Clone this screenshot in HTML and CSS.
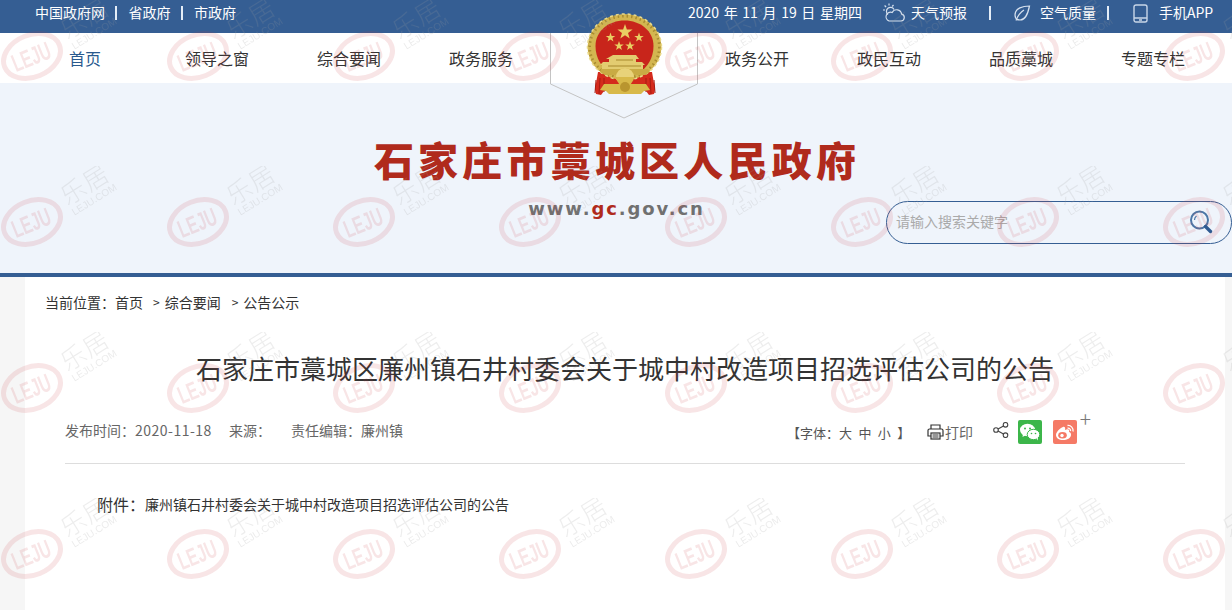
FILE: index.html
```html
<!DOCTYPE html>
<html lang="zh-CN">
  <head>
    <meta charset="UTF-8" />
    <meta name="viewport" content="width=device-width, initial-scale=1.0" />
    <title>石家庄市藁城区人民政府</title>
    <link rel="stylesheet" href="styles.css">
  </head>
  <body>
    <div class="topbar">
      <div class="top-left">
        <a>中国政府网</a><i class="sep"></i><a>省政府</a><i class="sep"></i><a>市政府</a>
      </div>
      <div class="top-right">
        <span class="date">2020 年 11 月 19 日 星期四</span>
        <svg class="ic-weather" width="24" height="22" viewBox="0 0 24 22" fill="none" stroke="#d5e0ee" stroke-width="1.2">
          <path d="M7 19h12a3.5 3.5 0 0 0 .6-6.9 5 5 0 0 0-9.4-1.6A4.4 4.4 0 0 0 7 19z" />
          <path d="M6 12.5a4 4 0 1 1 6-5" />
          <path d="M7 1.5v2M1 8h2M2.600 3.500l1.500 1.500M11.500 3l-1.300 1.500" />
        </svg>
        <a class="weather">天气预报</a>
        <i class="sep sep-a"></i>
        <svg class="ic-leaf" width="18" height="18" viewBox="0 0 18 18" fill="none" stroke="#d5e0ee" stroke-width="1.2">
          <path d="M16.500 2C10 2 2 4 2 11c0 3 2 5 5 5 6 0 8-7 9.500-14z" />
          <path d="M3 16.500C5 11 8 8 11 6" />
        </svg>
        <a class="air">空气质量</a>
        <i class="sep sep-b"></i>
        <svg class="ic-phone" width="15" height="19" viewBox="0 0 15 19" fill="none" stroke="#c8d6e8" stroke-width="1.4">
          <rect x="1" y="1" width="13" height="17" rx="2" />
          <path d="M1 14h13M6 16h3" />
        </svg>
        <a class="app">手机APP</a>
      </div>
    </div>

    <div class="nav">
      <div class="nav-group">
        <a class="cur">首页</a>
        <a>领导之窗</a>
        <a>综合要闻</a>
        <a>政务服务</a>
      </div>
      <div class="nav-group">
        <a>政务公开</a>
        <a>政民互动</a>
        <a>品质藁城</a>
        <a>专题专栏</a>
      </div>
    </div>

    <div class="banner">
      <h1 class="site-name">石家庄市藁城区人民政府</h1>
      <p class="site-url">www.<b>gc</b>.gov.cn</p>
      <div class="search">
        <input type="text" placeholder="请输入搜索关键字" />
        <svg width="24" height="26" viewBox="0 0 24 26" fill="none">
          <circle cx="10.500" cy="11" r="8.500" stroke="#4d76a6" stroke-width="2" />
          <path d="M5.500 11a5 5 0 0 1 2-4" stroke="#4d76a6" stroke-width="1.200" />
          <path d="M16.500 17.500l5 5" stroke="#2f5a92" stroke-width="3.400" stroke-linecap="round" />
        </svg>
      </div>
    </div>

    <svg class="emblem" width="160" height="112" viewBox="545 10 160 112">
      <defs>
        <polygon id="star" fill="#e9cf63" points="0,-10 2.350,-3.240 9.510,-3.090 3.800,1.240 5.880,8.090 0,4 -5.880,8.090 -3.800,1.240 -9.510,-3.090 -2.350,-3.240" />
      </defs>
      <polyline points="550.500,33 550.500,84 624,118 697.500,84 697.500,33" fill="none" stroke="#c4c4c4" />
      <!-- ribbon -->
      <path d="M598 72h54l3 17-1 5-5 1-3-4h-42l-3 4-5-1-1-5z" fill="#d42a1c" />
      <path d="M596 80l-1 13M600 78l-1 16M604 78v14M646 78v14M650 78l1 16M654 80l1 13" stroke="#a81b10" />
      <!-- wheat ring -->
      <ellipse cx="624.500" cy="47" rx="37" ry="33" fill="#d3b650" />
      <ellipse cx="624.500" cy="47" rx="35" ry="31" fill="none" stroke="#a98c30" stroke-width="3" stroke-dasharray="1.500 3" />
      <ellipse cx="624.500" cy="47" rx="37" ry="33" fill="none" stroke="#e9d98a" stroke-width="1.500" stroke-dasharray="3 3" />
      <path d="M595.500 46c0-15 13-25.500 29-25.500s29 10.500 29 25.500c0 13-7 21-11 24h-36c-4-3-11-11-11-24z" fill="#c8251b" />
      <use href="#star" transform="translate(625 32) scale(.8)" />
      <use href="#star" transform="translate(610.500 37.500) scale(.5)" />
      <use href="#star" transform="translate(639 37.500) scale(.5)" />
      <use href="#star" transform="translate(619 46) scale(.5)" />
      <use href="#star" transform="translate(630 46) scale(.5)" />
      <!-- gate building -->
      <path d="M613 55h23l3 4h-3v3h6l3 3h-2v4h-41v-4h-2l3-3h6v-3h-3z" fill="#e3cc70" />
      <path d="M601 69h47l2 3-5 3h-40l-5-3z" fill="#c9ab44" />
      <path d="M616 60h17M608 66h33" stroke="#a8892c" />
      <!-- gear and banner -->
      <circle cx="625" cy="77" r="9" fill="#d8b94a" />
      <path d="M616 77a9 9 0 0 1 18 0z" fill="#e8d27a" />
      <path d="M604 84h42l4 6-6 1-3 3h-32l-3-3-6-1z" fill="#d8b94a" />
      <circle cx="625" cy="87" r="5" fill="#b9952f" />
    </svg>

    <div class="page">
      <div class="crumb">
        <span>当前位置：</span><a>首页</a><em>&gt;</em><a>综合要闻</a><em class="last">&gt;</em><a>公告公示</a>
      </div>
      <h2 class="title">石家庄市藁城区廉州镇石井村委会关于城中村改造项目招选评估公司的公告</h2>
      <div class="meta">
        <div class="meta-left">
          <span>发布时间：<span class="num">2020-11-18</span></span>
          <span class="src">来源：</span>
          <span class="editor">责任编辑：廉州镇</span>
        </div>
        <div class="meta-right">
          <span class="fontsize">【字体：大 中 小 】</span>
          <svg class="ic-print" width="17" height="16" viewBox="0 0 17 16" fill="none" stroke="#333" stroke-width="1.200">
            <path d="M4 5V1h9v4M4 12H1V6.500A1.500 1.500 0 0 1 2.500 5h12A1.500 1.500 0 0 1 16 6.500V12h-3" />
            <rect x="4" y="9" width="9" height="6" />
            <path d="M5.500 11h6M5.500 13h6" />
          </svg>
          <span class="print">打印</span>
          <svg class="ic-share" width="16" height="16" viewBox="0 0 16 16" fill="none" stroke="#444" stroke-width="1.100">
            <circle cx="3" cy="8" r="2.300" />
            <circle cx="12.500" cy="2.800" r="2.300" />
            <circle cx="12.500" cy="13.200" r="2.300" />
            <path d="M5 7l5.500-3M5 9l5.500 3" />
          </svg>
          <span class="btn-wx">
            <svg width="20" height="18" viewBox="0 0 20 18" fill="#fff">
              <ellipse cx="7.500" cy="7" rx="7.500" ry="6.200" />
              <path d="M3 11l-.5 3 3.500-2z" />
              <ellipse cx="13.500" cy="11.500" rx="6.300" ry="5.200" stroke="#3cb64a" />
              <path d="M16.500 15.500l1.500 2-.2-3z" />
              <circle cx="5" cy="5.500" r="1" fill="#3cb64a" />
              <circle cx="10" cy="5.500" r="1" fill="#3cb64a" />
              <circle cx="11.500" cy="10.500" r=".8" fill="#3cb64a" />
              <circle cx="15.500" cy="10.500" r=".8" fill="#3cb64a" />
            </svg>
          </span>
          <span class="btn-wb">
            <svg width="20" height="18" viewBox="0 0 20 18" fill="none">
              <path d="M8 17C4 17 1 15 1 12c0-3 4-7 7-8 2-.6 2.500 1 2 3 3-1.500 5-.5 4 2 2 .5 2 2 2 3 0 3-4 5-8 5z" fill="#fff" />
              <ellipse cx="7.500" cy="12.300" rx="4.300" ry="3.300" fill="#f57a66" />
              <circle cx="7" cy="12.500" r="1.700" fill="#fff" />
              <path d="M12.500 2.500a5 5 0 0 1 5.500 6M12.500 5.200a2.500 2.500 0 0 1 3 3" stroke="#fff" stroke-width="1.300" />
            </svg>
          </span>
          <span class="more">+</span>
        </div>
      </div>
      <div class="attach">
        <span class="attach-label">附件：</span><a>廉州镇石井村委会关于城中村改造项目招选评估公司的公告</a>
      </div>
    </div>

    <!-- repeated watermark over the whole picture -->
    <svg class="watermark" width="1232" height="610">
      <defs>
        <pattern id="wm" width="166" height="166" patternUnits="userSpaceOnUse">
          <g transform="translate(32 56) rotate(-22)">
            <ellipse rx="29.500" ry="21" fill="none" class="wm-ring" />
            <text x="-1" y="9" text-anchor="middle" class="wm-logo" textLength="40" lengthAdjust="spacingAndGlyphs">LEJU</text>
          </g>
          <g transform="translate(87 22) rotate(-32)">
            <text x="0" y="5" text-anchor="middle" class="wm-cn">乐居</text>
            <text x="0" y="17" text-anchor="middle" class="wm-en">LEJU.COM</text>
          </g>
        </pattern>
      </defs>
      <rect width="1232" height="610" fill="url(#wm)" />
    </svg>
  </body>
</html>
```

FILE: styles.css
```css
* {
  margin: 0;
  padding: 0;
  box-sizing: border-box;
}
html,
body {
  height: 610px;
  overflow: hidden;
}
body {
  position: relative;
  font-family: "Noto Sans CJK SC", "Liberation Sans", sans-serif;
  background-color: #f6f6f6;
  color: #333;
}
a {
  color: inherit;
}
i,
em {
  font-style: normal;
}

/* top bar */
.topbar {
  display: flex;
  justify-content: space-between;
  height: 33px;
  padding-left: 35px;
  background-color: #355e93;
  color: #fff;
  font-size: 14px;
  line-height: 24px;
}
.top-left,
.top-right {
  display: flex;
  align-items: center;
  height: 24px;
}
.top-right svg {
  margin-top: 2px;
}
.sep {
  display: block;
  width: 2px;
  height: 14px;
  margin: 2px 11.500px 0 10px;
  background-color: #e4edf7;
}
.top-right {
  width: 544px;
}
.date {
  width: 194px;
  word-spacing: 1.500px;
}
.weather {
  margin-left: 5px;
}
.sep-a {
  margin: 2px 22px 0 22px;
}
.air {
  margin-left: 9px;
}
.sep-b {
  margin: 2px 24px 0 11px;
}
.app {
  margin-left: 11px;
}

/* nav */
.nav {
  display: flex;
  height: 50px;
  padding-left: 19px;
  background-color: #fff;
  gap: 144px;
  font-size: 16px;
  line-height: 50px;
}
.nav-group {
  display: flex;
}
.nav-group a {
  width: 132px;
  text-align: center;
}
.nav .cur {
  color: #2a5a8e;
}

/* banner */
.banner {
  position: relative;
  height: 194px;
  border-bottom: 4px solid #355e93;
  background-color: #eff4fb;
  text-align: center;
}
.site-name {
  padding-top: 46px;
  padding-left: 2px;
  font-size: 40px;
  font-weight: 900;
  line-height: 60px;
  letter-spacing: 4.200px;
  color: #b02a1c;
}
.site-url {
  margin-top: 6px;
  padding-left: 1px;
  font-family: "DejaVu Sans", sans-serif;
  font-size: 18px;
  font-weight: bold;
  line-height: 28px;
  letter-spacing: 1.900px;
  color: #707070;
}
.site-url b {
  color: #b02a1c;
}
.search {
  position: absolute;
  left: 886px;
  top: 118px;
  display: flex;
  align-items: center;
  width: 346px;
  height: 43px;
  padding: 0 18px 0 9px;
  border: 1px solid #355e93;
  border-radius: 22px;
}
.search input {
  flex: 1;
  margin-top: -4px;
  border: none;
  outline: none;
  background: transparent;
  font-family: inherit;
  font-size: 14px;
}
.search input::placeholder {
  color: #aaa;
}
.search svg {
  margin-top: -2px;
}

/* emblem sits over the nav and the banner */
.emblem {
  position: absolute;
  left: 545px;
  top: 10px;
}

/* article */
.page {
  width: 1200px;
  height: 333px;
  margin-left: 25px;
  background-color: #fff;
}
.crumb {
  display: flex;
  padding: 15px 0 0 20px;
  font-size: 14px;
  line-height: 20px;
}
.crumb em {
  margin: 0 5px 0 10px;
  font-size: 12px;
}
.crumb em.last {
  margin: 0 5px 0 11px;
}
.title {
  margin-top: 36px;
  font-size: 26px;
  font-weight: normal;
  line-height: 40px;
  text-align: center;
}
.meta {
  display: flex;
  justify-content: space-between;
  align-items: center;
  height: 62px;
  margin: 14px 40px 0;
  border-bottom: 1px solid #ddd;
  padding-bottom: 6px;
  color: #666;
  font-size: 14px;
}
.meta-left {
  display: flex;
}
.num {
  letter-spacing: 0.500px;
}
.src {
  margin-left: 17px;
}
.editor {
  margin-left: 20px;
}
.meta-right {
  position: relative;
  display: flex;
  align-items: center;
  width: 398px;
  height: 26px;
  margin-top: 4px;
}
.fontsize {
  width: 140px;
  margin-left: 0;
  padding-top: 2px;
  font-size: 13px;
  word-spacing: 3.500px;
  color: #555;
}
.print {
  margin: 1px 0 0 1px;
  font-size: 14px;
}
.ic-share {
  margin: -4px 0 0 20px;
}
.btn-wx,
.btn-wb {
  display: flex;
  align-items: center;
  justify-content: center;
  width: 24px;
  height: 24px;
  border-radius: 2px;
  background-color: #3cb64a;
}
.btn-wx {
  margin-left: 9px;
}
.btn-wb {
  margin-left: 11px;
  background-color: #f57a66;
}
.more {
  position: absolute;
  right: 94px;
  top: -16px;
  font-size: 21px;
  font-weight: 200;
  color: #777;
}
.attach {
  display: flex;
  align-items: center;
  padding: 28px 0 0 72px;
  font-size: 14px;
  line-height: 24px;
}
.attach-label {
  font-size: 16px;
}

/* watermark */
.watermark {
  position: absolute;
  left: 0;
  top: 0;
  pointer-events: none;
}
.wm-ring {
  stroke: #c8323c;
  stroke-width: 5px;
  stroke-opacity: 0.13;
}
.wm-logo {
  font-family: "Liberation Sans", sans-serif;
  font-size: 25px;
  font-weight: bold;
  fill: #c8323c;
  fill-opacity: 0.13;
}
.wm-cn {
  font-family: "Noto Sans CJK SC", sans-serif;
  font-size: 25px;
  font-weight: 300;
  letter-spacing: 1px;
  fill: #999;
  fill-opacity: 0.18;
}
.wm-en {
  font-family: "Liberation Sans", sans-serif;
  font-size: 10px;
  fill: #999;
  fill-opacity: 0.2;
}
```
